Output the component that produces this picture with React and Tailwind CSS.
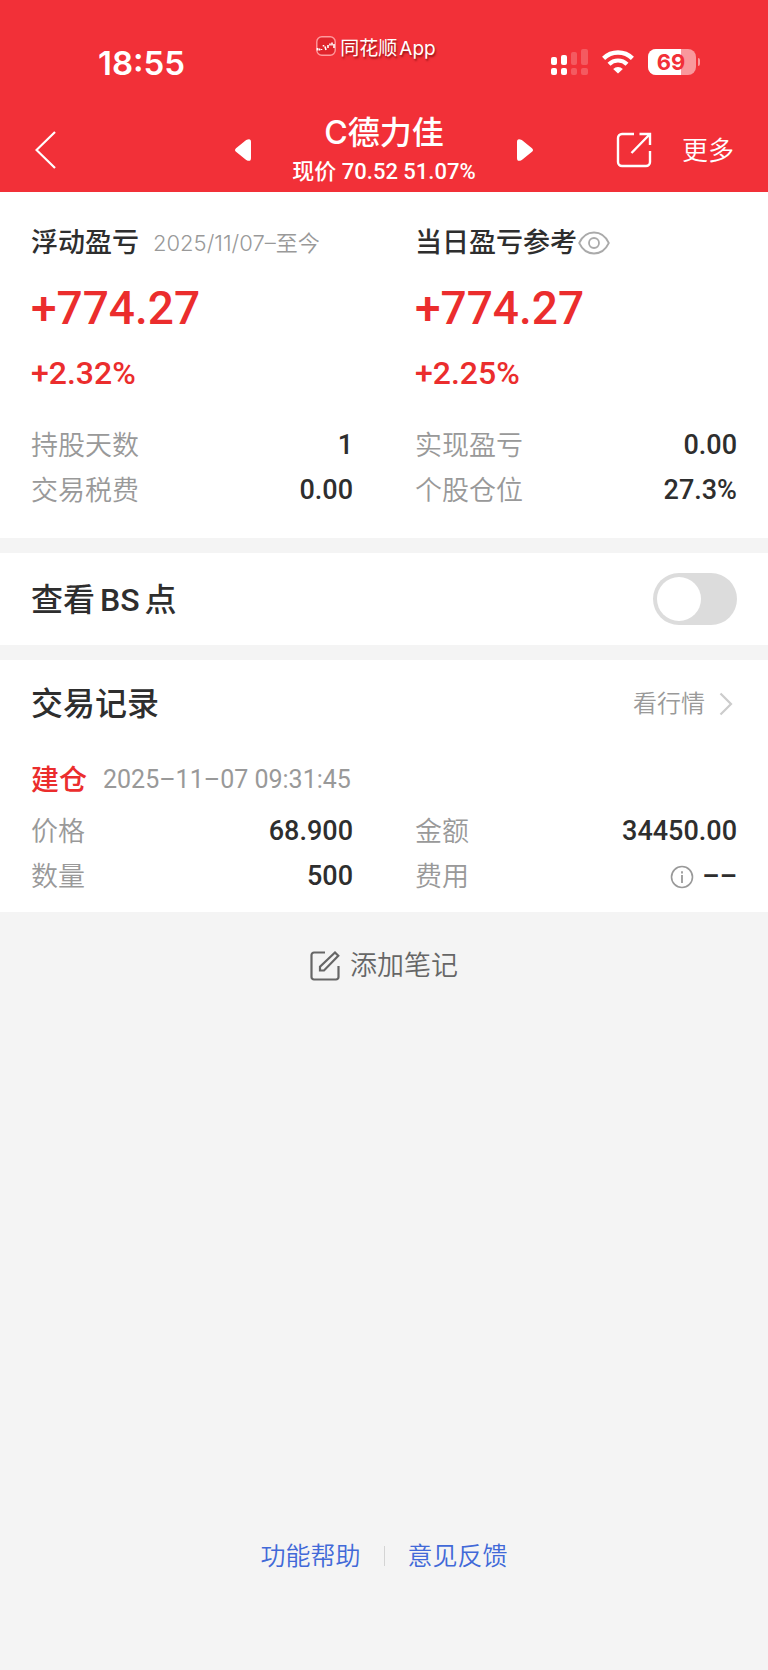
import React, { useState } from "react";

const floating = {
  title: "浮动盈亏",
  range: "2025/11/07–至今",
  amount: "+774.27",
  percent: "+2.32%",
  rows: [
    { label: "持股天数", value: "1" },
    { label: "交易税费", value: "0.00" },
  ],
};

const today = {
  title: "当日盈亏参考",
  amount: "+774.27",
  percent: "+2.25%",
  rows: [
    { label: "实现盈亏", value: "0.00" },
    { label: "个股仓位", value: "27.3%" },
  ],
};

function SignalIcon() {
  return (
    <svg width="37" height="27" viewBox="0 0 37 27" fill="#fff">
      <rect x="0" y="8" width="6" height="8" rx="2" />
      <rect x="0" y="19" width="6" height="7" rx="2" />
      <rect x="10" y="6" width="6" height="10" rx="2" />
      <rect x="10" y="19" width="6" height="7" rx="2" />
      <g opacity="0.2">
        <rect x="20" y="3" width="6" height="13" rx="2" />
        <rect x="20" y="19" width="6" height="7" rx="2" />
        <rect x="30" y="0" width="7" height="16" rx="2" />
        <rect x="30" y="19" width="7" height="7" rx="2" />
      </g>
    </svg>
  );
}

function WifiIcon() {
  return (
    <svg width="32" height="24" viewBox="0 0 32 24" fill="none" stroke="#fff">
      <path d="M1.6 8.4a20.6 20.6 0 0 1 28.8 0" strokeWidth="4.4" />
      <path d="M7 14.2a12.8 12.8 0 0 1 18 0" strokeWidth="4.2" />
      <path
        d="M16 23.6l-4.8-4.7a6.8 6.8 0 0 1 9.6 0z"
        fill="#fff"
        stroke="none"
      />
    </svg>
  );
}

function Battery({ level }) {
  return (
    <div className="flex items-center gap-0.5">
      <div className="relative flex h-[26px] w-12 items-center overflow-hidden rounded-lg bg-white/50">
        <div
          className="absolute inset-y-0 left-0 bg-white"
          style={{ width: `${level}%` }}
        />
        <span className="relative w-[46px] text-center text-[22px] leading-[26px] font-bold text-[#f23038]">
          {level}
        </span>
      </div>
      <div className="h-2 w-0.5 rounded-r-full bg-white/50" />
    </div>
  );
}

function AppLogo() {
  return (
    <svg width="20" height="20" viewBox="0 0 20 20" fill="none">
      <rect
        x="0.8"
        y="0.8"
        width="18.4"
        height="18.4"
        rx="5"
        fill="#e0242c"
        stroke="#ff9a9d"
        strokeWidth="1.4"
      />
      <path
        d="M1.5 12v2.5M3.5 12.5v2M5.5 13v1M7.5 9v1.5M9 10.5l1 3.5M12 9v3M14 7.5v2M16 6.5v3M18 8v4"
        stroke="#fff"
        strokeWidth="1.6"
      />
    </svg>
  );
}

function StatusBar() {
  return (
    <div className="grid h-[110px] grid-cols-[1fr_auto_1fr] pt-9">
      <span className="pt-[7px] pl-[98px] text-[33px] leading-10 font-semibold">
        18:55
      </span>
      <div className="flex items-start gap-1 pr-4 text-[19px] [text-shadow:1px_2px_2px_rgba(90,0,0,0.6)]">
        <AppLogo />
        <span className="flex gap-0.5 leading-[26px]">
          <span>同花顺</span>
          <span>App</span>
        </span>
      </div>
      <div className="flex h-[52px] items-center justify-end gap-3.5 pr-[68px]">
        <SignalIcon />
        <WifiIcon />
        <Battery level={69} />
      </div>
    </div>
  );
}

function Triangle({ flip }) {
  return (
    <svg
      width="16"
      height="22"
      viewBox="0 0 16 22"
      fill="#fff"
      className={flip ? "rotate-180" : ""}
    >
      <path d="M1 9.2 11.2 1Q16 -1.4 16 3v16q0 4.400-4.800 2L1 12.800q-2-1.800 0-3.600z" />
    </svg>
  );
}

function NavBar() {
  return (
    <div className="grid h-20 grid-cols-[1fr_298px_1fr] items-center">
      <button type="button" aria-label="返回" className="justify-self-start pl-[35px]">
        <svg width="21" height="38" viewBox="0 0 21 38" fill="none" stroke="#fff">
          <path d="M20 1 1.500 19 20 37" strokeWidth="2.200" />
        </svg>
      </button>
      <div className="flex items-center justify-between">
        <button type="button" aria-label="上一只">
          <Triangle />
        </button>
        <div className="pb-[3px] text-center">
          <h1 className="text-[32px] leading-11 font-medium">C德力佳</h1>
          <p className="mt-[3px] font-[Roboto,'Noto_Sans_CJK_SC',sans-serif] text-[22px] leading-7 font-medium">
            现价 70.52 51.07%
          </p>
        </div>
        <button type="button" aria-label="下一只">
          <Triangle flip />
        </button>
      </div>
      <div className="flex items-center justify-end gap-[30px] pr-[34px]">
        <button type="button" aria-label="分享">
          <svg
            width="36"
            height="36"
            viewBox="0 0 36 36"
            fill="none"
            stroke="#fff"
            strokeWidth="2.400"
          >
            <path d="M18 2H6a4 4 0 0 0-4 4v24a4 4 0 0 0 4 4h24a4 4 0 0 0 4-4V19" />
            <path d="M23.500 2H34v11M34 2 15.500 21" />
          </svg>
        </button>
        <button type="button" className="pt-0.5 text-[26px] leading-9 font-[350]">
          更多
        </button>
      </div>
    </div>
  );
}

function Row({ label, value, info }) {
  return (
    <div className="flex items-center justify-between leading-[45px]">
      <dt className="text-[27px] font-[350] text-[#999]">{label}</dt>
      <dd className="flex items-center gap-2 font-[Roboto] text-[27px] font-medium text-[#2e2e2e]">
        {info && (
          <svg width="24" height="24" viewBox="0 0 24 24" fill="none" stroke="#999">
            <circle cx="12" cy="12" r="10.500" strokeWidth="1.600" />
            <path d="M12 10v8M12 6.200v2.200" strokeWidth="1.800" />
          </svg>
        )}
        {value}
      </dd>
    </div>
  );
}

function ProfitColumn({ data, children }) {
  return (
    <div>
      <div className="flex items-center leading-9">
        <h2 className="text-[27px] font-medium text-[#2e2e2e]">{data.title}</h2>
        {children}
      </div>
      <p className="mt-[17px] font-[Roboto] text-[46px] leading-[60px] font-medium text-[#eb2d2d]">
        {data.amount}
      </p>
      <p className="mt-[17px] font-[Roboto] text-[32px] leading-9 font-medium text-[#eb2d2d]">
        {data.percent}
      </p>
      <dl className="mt-8">
        {data.rows.map((r) => (
          <Row key={r.label} label={r.label} value={r.value} />
        ))}
      </dl>
    </div>
  );
}

export default function App() {
  const [showBs, setShowBs] = useState(false);

  return (
    <div className="flex min-h-screen flex-col bg-[#f4f4f4] font-[Inter,'Noto_Sans_CJK_SC',sans-serif]">
      <header className="bg-[#f23038] pb-0.5 text-white">
        <StatusBar />
        <NavBar />
      </header>

      <main>
        <section className="grid grid-cols-2 gap-[62px] bg-white px-[31px] pt-[33px] pb-[25px]">
          <ProfitColumn data={floating}>
            <span className="ml-3.5 text-[22px] leading-8 font-[350] text-[#999]">
              {floating.range}
            </span>
          </ProfitColumn>
          <ProfitColumn data={today}>
            <button type="button" aria-label="隐藏金额" className="ml-px">
              <svg width="32" height="24" viewBox="0 0 32 24" fill="none" stroke="#aaa">
                <path
                  d="M1.200 12C4.500 5 9.800 1.500 16 1.500S27.500 5 30.800 12C27.500 19 22.200 22.500 16 22.500S4.500 19 1.200 12z"
                  strokeWidth="1.800"
                />
                <circle cx="16" cy="12" r="5" strokeWidth="1.800" />
              </svg>
            </button>
          </ProfitColumn>
        </section>

        <section className="mt-[15px] flex h-[92px] items-center justify-between bg-white px-[31px]">
          <label
            htmlFor="bs"
            className="flex gap-[5px] pt-0.5 text-[32px] leading-12 font-medium text-[#2e2e2e]"
          >
            <span>查看</span>
            <span className="font-[Roboto]">BS</span>
            <span>点</span>
          </label>
          <input
            id="bs"
            type="checkbox"
            role="switch"
            checked={showBs}
            onChange={(e) => setShowBs(e.target.checked)}
            className="h-[52px] w-[84px] appearance-none rounded-full bg-[#dcdcdc] p-1 before:block before:size-11 before:rounded-full before:bg-white checked:bg-[#eb2d2d] checked:before:ml-8"
          />
        </section>

        <section className="mt-[15px] bg-white px-[31px] pt-5 pb-[13px]">
          <div className="flex items-center justify-between">
            <h2 className="text-[32px] leading-12 font-medium text-[#2e2e2e]">
              交易记录
            </h2>
            <a href="#quote" className="flex items-center gap-3.5 pr-1 text-2xl font-[350] text-[#999]">
              看行情
              <svg width="14" height="24" viewBox="0 0 14 24" fill="none" stroke="#ccc">
                <path d="M1.500 1.500 12 12 1.500 22.500" strokeWidth="2.200" />
              </svg>
            </a>
          </div>
          <div className="mt-8 flex items-center gap-4 leading-10">
            <span className="text-[28px] font-medium text-[#eb2d2d]">建仓</span>
            <time className="font-[Roboto] text-[25px] text-[#999]">
              2025–11–07 09:31:45
            </time>
          </div>
          <dl className="mt-[9px] grid grid-cols-2 gap-x-[62px]">
            <Row label="价格" value="68.900" />
            <Row label="金额" value="34450.00" />
            <Row label="数量" value="500" />
            <Row label="费用" value="––" info />
          </dl>
        </section>
      </main>

      <button
        type="button"
        className="mt-9 flex items-center gap-2.5 self-center text-[27px] leading-9 font-[350] text-[#666]"
      >
        <svg width="30" height="30" viewBox="0 0 30 30" fill="none" stroke="#666" strokeWidth="2.200">
          <path d="M15 1.500H4A2.500 2.500 0 0 0 1.500 4v22A2.500 2.500 0 0 0 4 28.500h22a2.500 2.500 0 0 0 2.500-2.500V15" />
          <path d="M25 1.500l3.300 3.300L14 19.500h-4v-3.800z" />
        </svg>
        添加笔记
      </button>

      <footer className="mt-auto flex items-center justify-center gap-[23px] pb-24 text-[25px] leading-9 font-[350] text-[#4169d8]">
        <a href="#help">功能帮助</a>
        <span className="h-5 w-px bg-[#d4d4d4]" />
        <a href="#feedback">意见反馈</a>
      </footer>
    </div>
  );
}
